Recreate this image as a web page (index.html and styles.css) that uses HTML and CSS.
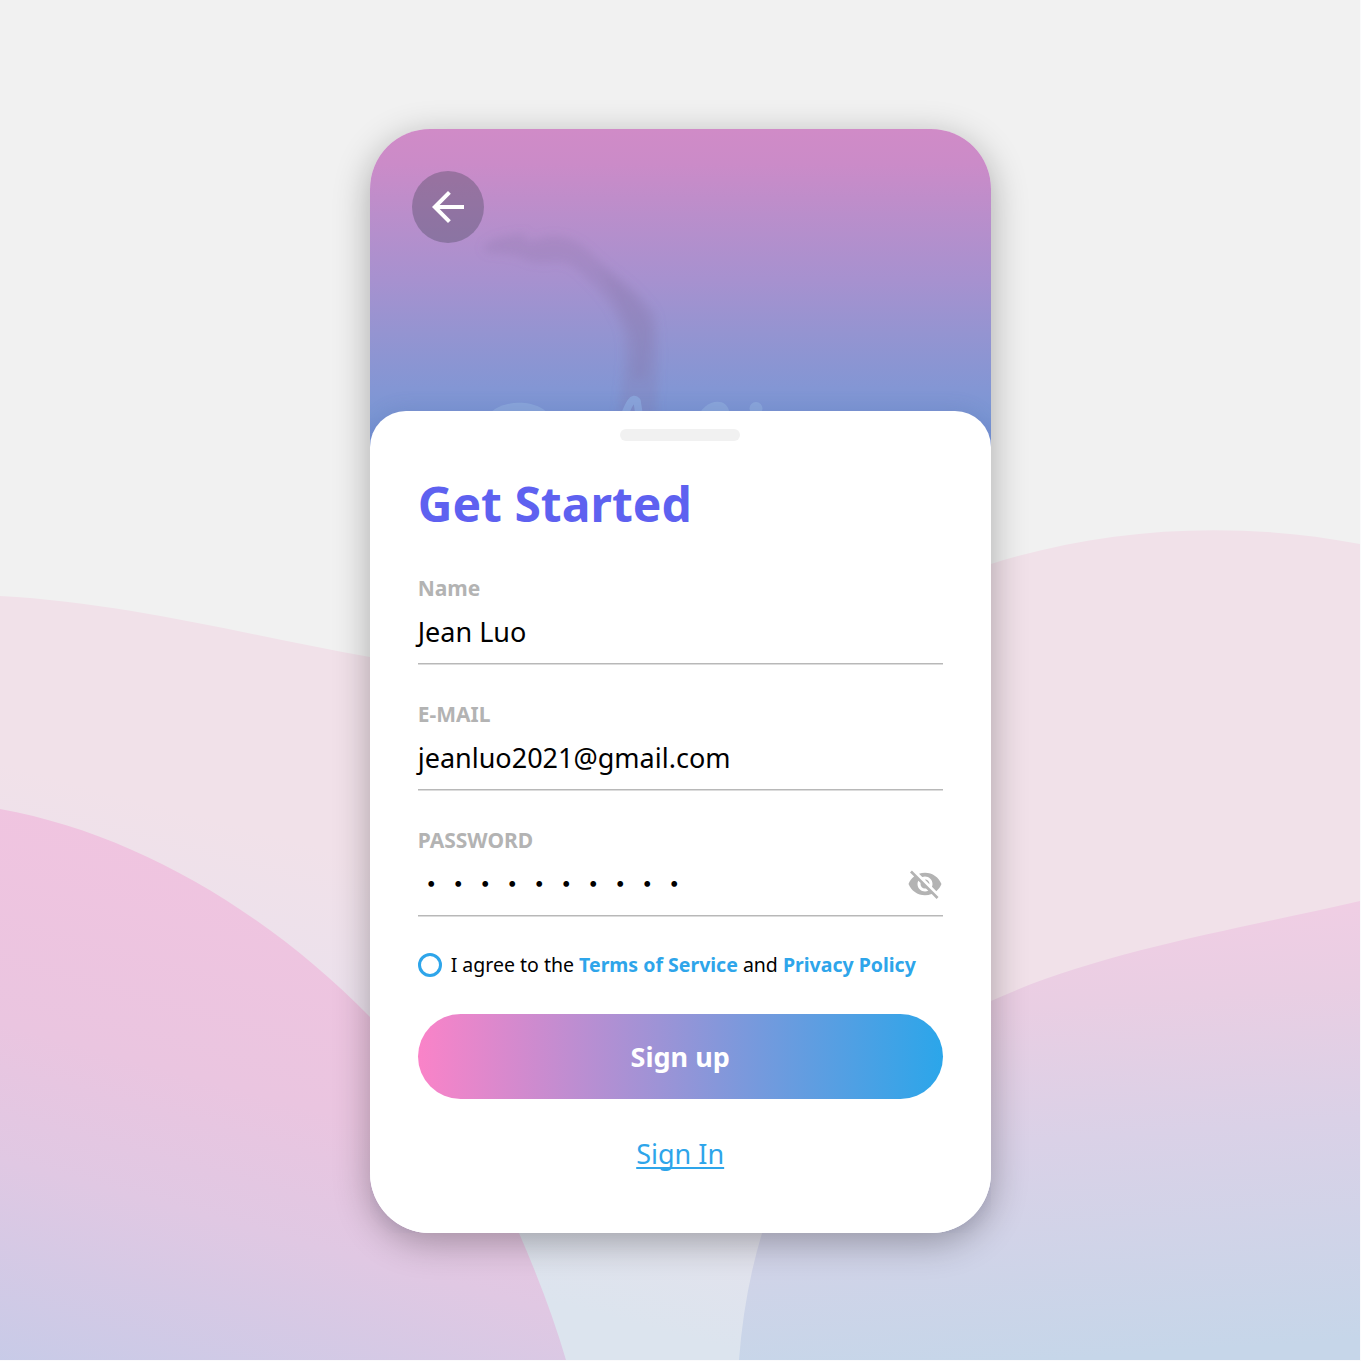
FILE: index.html
```html
<!DOCTYPE html>
<html lang="en">
<head>
<meta charset="utf-8">
<title>Get Started</title>
<link rel="stylesheet" href="styles.css">
</head>
<body>
<div class="page">
  <svg class="waves" viewBox="0 0 1360 1360" aria-hidden="true">
    <defs>
      <linearGradient id="far" gradientUnits="userSpaceOnUse" x1="640" y1="930" x2="543" y2="1300">
        <stop offset="0" stop-color="#f1e1e9"/>
        <stop offset=".35" stop-color="#ece1ec"/>
        <stop offset="1" stop-color="#dce4ee"/>
      </linearGradient>
      <linearGradient id="left" gradientUnits="userSpaceOnUse" x1="180" y1="810" x2="20" y2="1390">
        <stop offset="0" stop-color="#f1c4e0"/>
        <stop offset=".42" stop-color="#eac5e0"/>
        <stop offset=".64" stop-color="#e0c8e3"/>
        <stop offset="1" stop-color="#c5cbe8"/>
      </linearGradient>
      <linearGradient id="right" gradientUnits="userSpaceOnUse" x1="1100" y1="915" x2="1130" y2="1355">
        <stop offset="0" stop-color="#f0cee4"/>
        <stop offset=".2" stop-color="#e9cee3"/>
        <stop offset=".5" stop-color="#dad1e7"/>
        <stop offset="1" stop-color="#c6d6e9"/>
      </linearGradient>
    </defs>
    <path fill="url(#far)" d="M0 596C130 603 250 636 370 657C620 694 800 625 991 564C1110 526 1240 521 1360 544V1360H0Z"/>
    <path fill="url(#left)" d="M0 809C134 833 266 911 370 1017C430 1078 485 1149 519 1233Q549 1302 566 1360H0Z"/>
    <path fill="url(#right)" d="M739 1360Q744 1293 762 1233C800 1115 890 1043 991 1001C1100 951 1240 929 1360 901V1360Z"/>
  </svg>

  <main class="phone">
    <header class="hero">
      <svg class="hero-art" viewBox="0 0 621 330" aria-hidden="true">
        <defs>
          <filter id="soft" x="-20%" y="-20%" width="140%" height="140%"><feGaussianBlur stdDeviation="5"/></filter>
        </defs>
        <g filter="url(#soft)" fill="#85709f">
          <path opacity=".22" d="M112 119C125 105 145 107 158 103C148 115 160 113 178 107C200 106 210 113 223 126C243 145 265 156 285 184C291 210 288 245 286 300H248C250 255 260 218 249 194C240 172 223 154 205 139C190 128 181 136 163 133C152 131 149 125 138 126C128 122 119 128 112 119Z"/>
          <path opacity=".17" d="M226 136C253 158 277 176 281 202L277 250H262C265 225 267 208 256 190C248 168 234 153 226 134Z"/>
        </g>
        <g fill="#95b4e0" opacity=".55">
          <path d="M116 291C124 268 174 268 182 291V305H116Z"/>
          <path d="M326 293C332 270 356 267 359 282L353 305H323Z"/>
          <circle cx="386" cy="279.5" r="6.5"/>
        </g>
        <path d="M253 290C259 274 263 267 267 272L270 291" fill="none" stroke="#8eaee1" stroke-opacity=".7" stroke-width="7.5" stroke-linecap="round" stroke-linejoin="round"/>
      </svg>
      <button class="back" aria-label="Back">
        <svg viewBox="0 0 24 24" width="48" height="48"><path fill="#fff" d="M20 11H7.83l5.59-5.59L12 4l-8 8 8 8 1.41-1.41L7.83 13H20v-2z"/></svg>
      </button>
    </header>

    <section class="sheet">
      <div class="handle"></div>
      <h1 class="title">Get Started</h1>
      <div class="fields">
        <div class="field">
          <div class="label">Name</div>
          <div class="value">Jean Luo</div>
        </div>
        <div class="field">
          <div class="label">E-MAIL</div>
          <div class="value">jeanluo2021@gmail.com</div>
        </div>
        <div class="field">
          <div class="label">PASSWORD</div>
          <div class="value value-secret">
            <span class="dots">・・・・・・・・・・</span>
            <svg class="eye" viewBox="0 0 24 24" width="36" height="36"><path fill="#b3b3b3" d="M12 7c2.76 0 5 2.24 5 5 0 .65-.13 1.26-.36 1.83l2.92 2.92c1.51-1.26 2.7-2.89 3.43-4.75-1.73-4.39-6-7.5-11-7.5-1.4 0-2.74.25-3.98.7l2.16 2.16C10.74 7.13 11.35 7 12 7zM2 4.27l2.28 2.28.46.46C3.08 8.3 1.78 10.02 1 12c1.73 4.39 6 7.5 11 7.5 1.55 0 3.03-.3 4.38-.84l.42.42L19.73 22 21 20.73 3.27 3 2 4.27zM7.53 9.8l1.55 1.55c-.05.21-.08.43-.08.65 0 1.66 1.34 3 3 3 .22 0 .44-.03.65-.08l1.55 1.55c-.67.33-1.41.53-2.2.53-2.76 0-5-2.24-5-5 0-.79.2-1.53.53-2.2zm4.31-.78l3.15 3.15.02-.16c0-1.66-1.34-3-3-3l-.17.01z"/></svg>
          </div>
        </div>
      </div>
      <div class="agree">
        <span class="radio"></span>
        <p class="terms">I agree to the <a>Terms of Service</a> and <a>Privacy Policy</a></p>
      </div>
      <button class="signup">Sign up</button>
      <a class="signin">Sign In</a>
    </section>
  </main>
</div>
</body>
</html>
```
FILE: styles.css
```css
* { box-sizing: border-box; }

body {
  margin: 0;
  background: #fbfbfc;
  font-family: "Noto Sans", "Noto Sans CJK JP", sans-serif;
}

h1, p { margin: 0; }

button {
  border: 0;
  padding: 0;
  font-family: inherit;
}

.page {
  display: grid;
  width: 1360px;
  height: 1360px;
  background: #f1f1f1;
  overflow: hidden;
}

.waves, .phone { grid-area: 1 / 1; }

.waves {
  display: block;
  width: 1360px;
  height: 1360px;
}

.phone {
  z-index: 1;
  display: grid;
  grid-template-rows: 282px 822px;
  width: 621px;
  height: 1104px;
  margin: 129px 0 0 370px;
  border-radius: 60px;
  background: linear-gradient(#d08bc7 0, #cb8bc8 35px, #ba8ecb 85px, #a791cf 150px, #9494d1 205px, #8396d4 260px, #7b96d3 285px, #6d8bd0 330px, #fff 331px);
  box-shadow: 0 9px 36px rgba(0, 0, 0, .3);
}

.hero {
  display: grid;
  height: 318px;
  overflow: hidden;
  border-radius: 60px 60px 0 0;
}

.hero-art, .back { grid-area: 1 / 1; }

.hero-art {
  width: 621px;
  height: 330px;
}

.back {
  display: grid;
  place-items: center;
  width: 72px;
  height: 72px;
  margin: 42px;
  border-radius: 50%;
  background: rgba(70, 70, 90, .36);
}

.sheet {
  z-index: 1;
  display: flex;
  flex-direction: column;
  padding: 18px 48.3px 0 47.7px;
  border-radius: 36px 36px 60px 60px;
  background: #fff;
  box-shadow: 0 -4px 18px rgba(80, 90, 160, .14);
  clip-path: inset(-24px 0 0 0);
}

.handle {
  width: 120px;
  height: 12px;
  align-self: center;
  border-radius: 6px;
  background: #f1f1f1;
}

.title {
  margin-top: 33px;
  font-size: 48px;
  line-height: 60px;
  font-weight: 700;
  color: #5e61f0;
}

.fields {
  display: flex;
  flex-direction: column;
  gap: 36px;
  margin-top: 40px;
}

/* the shadow softens the rule to about one and a half pixels */
.field {
  display: flex;
  flex-direction: column;
  gap: 11px;
  height: 90px;
  border-bottom: 1px solid #b8b8b8;
  box-shadow: 0 1px #dcdcdc;
}

.label {
  font-size: 21px;
  line-height: 28px;
  font-weight: 700;
  color: #b3b3b3;
}

.value {
  font-size: 27px;
  line-height: 38px;
  color: #000;
}

.value-secret {
  display: flex;
  justify-content: space-between;
  align-items: center;
  height: 38px;
}

.dots {
  font-family: "Noto Sans CJK JP", sans-serif;
  margin-top: -2px;
}

.agree {
  display: flex;
  align-items: center;
  gap: 9px;
  height: 24px;
  margin-top: 37px;
}

.radio {
  width: 24px;
  height: 24px;
  border: 3px solid #2ea5ea;
  border-radius: 50%;
}

.terms {
  font-size: 19.5px;
  line-height: 24px;
  white-space: nowrap;
}

.terms a {
  font-weight: 700;
  color: #2ea5ea;
}

.signup {
  height: 85px;
  margin-top: 37px;
  border-radius: 43px;
  background: linear-gradient(90deg, #fa83c8 0%, #9d93d6 46%, #2ba6ea 100%);
  font-size: 27px;
  font-weight: 700;
  line-height: 38px;
  color: #fff;
}

.signin {
  align-self: center;
  margin-top: 36px;
  font-size: 27px;
  line-height: 38px;
  color: #2ea5ea;
  text-decoration: underline;
  text-decoration-thickness: 1.5px;
  text-underline-offset: 3px;
  text-decoration-skip-ink: none;
}
```
